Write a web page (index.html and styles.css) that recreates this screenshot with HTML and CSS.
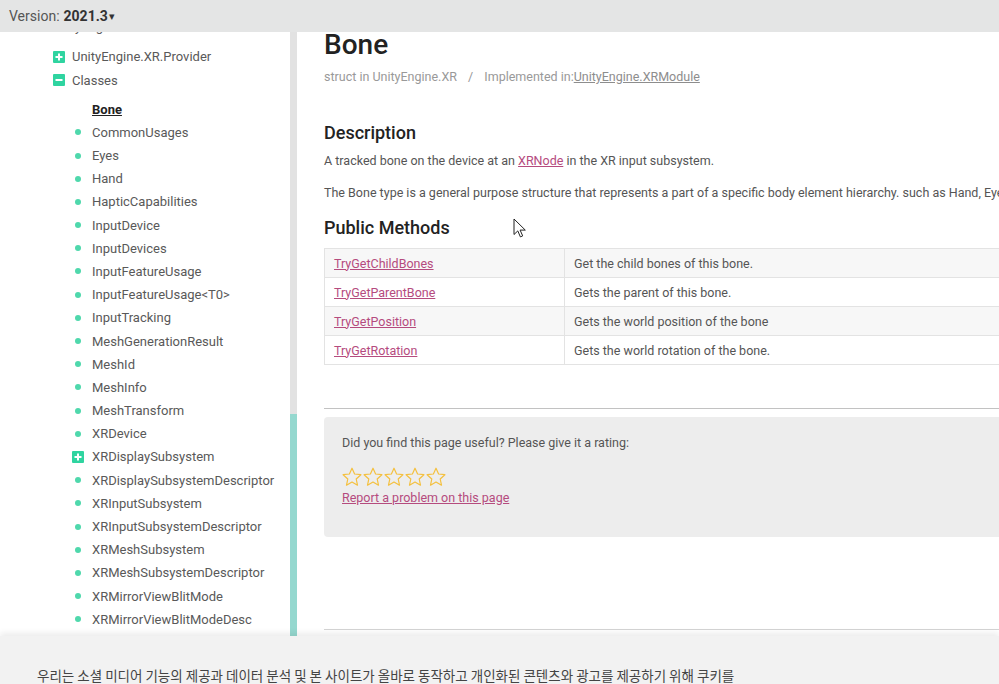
FILE: index.html
```html
<!DOCTYPE html>
<html lang="en">
<head>
<meta charset="utf-8">
<title>Bone - Unity Scripting API</title>
<link rel="stylesheet" href="styles.css">
</head>
<body>
<header class="topbar">
  <span class="version-label">Version:</span>
  <span class="version-num">2021.3</span><span class="caret">&#9662;</span>
</header>

<div class="layout">
  <nav class="sidebar">
    <div class="tree">
      <div class="node lvl1"><svg class="ico" viewBox="0 0 12 12"><rect width="12" height="12" rx="1" class="sq"/><path d="M2.5 6h7" class="mk"/></svg><span>UnityEngine.XR</span></div>
      <div class="node lvl2 first"><svg class="ico" viewBox="0 0 12 12"><rect width="12" height="12" rx="1" class="sq"/><path d="M2.5 6h7M6 2.5v7" class="mk"/></svg><span>UnityEngine.XR.Provider</span></div>
      <div class="node lvl2"><svg class="ico" viewBox="0 0 12 12"><rect width="12" height="12" rx="1" class="sq"/><path d="M2.5 6h7" class="mk"/></svg><span>Classes</span></div>
      <div class="node lvl3 current"><span>Bone</span></div>
      <div class="node lvl3"><i class="dot"></i><span>CommonUsages</span></div>
      <div class="node lvl3"><i class="dot"></i><span>Eyes</span></div>
      <div class="node lvl3"><i class="dot"></i><span>Hand</span></div>
      <div class="node lvl3"><i class="dot"></i><span>HapticCapabilities</span></div>
      <div class="node lvl3"><i class="dot"></i><span>InputDevice</span></div>
      <div class="node lvl3"><i class="dot"></i><span>InputDevices</span></div>
      <div class="node lvl3"><i class="dot"></i><span>InputFeatureUsage</span></div>
      <div class="node lvl3"><i class="dot"></i><span>InputFeatureUsage&lt;T0&gt;</span></div>
      <div class="node lvl3"><i class="dot"></i><span>InputTracking</span></div>
      <div class="node lvl3"><i class="dot"></i><span>MeshGenerationResult</span></div>
      <div class="node lvl3"><i class="dot"></i><span>MeshId</span></div>
      <div class="node lvl3"><i class="dot"></i><span>MeshInfo</span></div>
      <div class="node lvl3"><i class="dot"></i><span>MeshTransform</span></div>
      <div class="node lvl3"><i class="dot"></i><span>XRDevice</span></div>
      <div class="node lvl3"><svg class="ico ico3" viewBox="0 0 12 12"><rect width="12" height="12" rx="1" class="sq"/><path d="M2.5 6h7M6 2.5v7" class="mk"/></svg><span>XRDisplaySubsystem</span></div>
      <div class="node lvl3"><i class="dot"></i><span>XRDisplaySubsystemDescriptor</span></div>
      <div class="node lvl3"><i class="dot"></i><span>XRInputSubsystem</span></div>
      <div class="node lvl3"><i class="dot"></i><span>XRInputSubsystemDescriptor</span></div>
      <div class="node lvl3"><i class="dot"></i><span>XRMeshSubsystem</span></div>
      <div class="node lvl3"><i class="dot"></i><span>XRMeshSubsystemDescriptor</span></div>
      <div class="node lvl3"><i class="dot"></i><span>XRMirrorViewBlitMode</span></div>
      <div class="node lvl3"><i class="dot"></i><span>XRMirrorViewBlitModeDesc</span></div>
      <div class="node lvl3"><i class="dot"></i><span>XRMirrorViewBlitParams</span></div>
    </div>
    <div class="scrollbar"><div class="thumb"></div></div>
  </nav>

  <main class="content">
    <div class="inner">
      <h1 class="title">Bone</h1>
      <p class="signature">struct in UnityEngine.XR <span class="sep">/</span> Implemented in:<a href="#" class="module">UnityEngine.XRModule</a></p>

      <h2 class="section">Description</h2>
      <p class="text first">A tracked bone on the device at an <a href="#" class="link">XRNode</a> in the XR input subsystem.</p>
      <p class="text second">The Bone type is a general purpose structure that represents a part of a specific body element hierarchy. such as Hand, Eyes, or full body skeleton.</p>

      <h2 class="section methods">Public Methods</h2>
      <table class="members">
        <tr><td class="lbl"><a href="#" class="link">TryGetChildBones</a></td><td class="desc">Get the child bones of this bone.</td></tr>
        <tr><td class="lbl"><a href="#" class="link">TryGetParentBone</a></td><td class="desc">Gets the parent of this bone.</td></tr>
        <tr><td class="lbl"><a href="#" class="link">TryGetPosition</a></td><td class="desc">Gets the world position of the bone</td></tr>
        <tr><td class="lbl"><a href="#" class="link">TryGetRotation</a></td><td class="desc">Gets the world rotation of the bone.</td></tr>
      </table>

      <hr class="rule">

      <div class="feedback">
        <p class="fb-q">Did you find this page useful? Please give it a rating:</p>
        <div class="stars">
          <svg class="star" viewBox="0 0 20 20"><path d="M10 1.2l2.6 5.8 6.3.7-4.7 4.3 1.3 6.2L10 15l-5.5 3.2 1.3-6.2L1.1 7.7l6.3-.7z"/></svg>
          <svg class="star" viewBox="0 0 20 20"><path d="M10 1.2l2.6 5.8 6.3.7-4.7 4.3 1.3 6.2L10 15l-5.5 3.2 1.3-6.2L1.1 7.7l6.3-.7z"/></svg>
          <svg class="star" viewBox="0 0 20 20"><path d="M10 1.2l2.6 5.8 6.3.7-4.7 4.3 1.3 6.2L10 15l-5.5 3.2 1.3-6.2L1.1 7.7l6.3-.7z"/></svg>
          <svg class="star" viewBox="0 0 20 20"><path d="M10 1.2l2.6 5.8 6.3.7-4.7 4.3 1.3 6.2L10 15l-5.5 3.2 1.3-6.2L1.1 7.7l6.3-.7z"/></svg>
          <svg class="star" viewBox="0 0 20 20"><path d="M10 1.2l2.6 5.8 6.3.7-4.7 4.3 1.3 6.2L10 15l-5.5 3.2 1.3-6.2L1.1 7.7l6.3-.7z"/></svg>
        </div>
        <a href="#" class="link report">Report a problem on this page</a>
      </div>

      <hr class="rule bottom">
    </div>
    <svg class="cursor" viewBox="0 0 13 20" width="13" height="20"><path d="M1 1v15.5l3.8-3.6 2.6 6 2.3-1-2.6-5.8h5.2z" fill="#fff" stroke="#222" stroke-width="1" stroke-linejoin="round"/></svg>
  </main>
</div>

<footer class="cookie">
  <p>우리는 소셜 미디어 기능의 제공과 데이터 분석 및 본 사이트가 올바로 동작하고 개인화된 콘텐츠와 광고를 제공하기 위해 쿠키를</p>
</footer>
</body>
</html>
```

FILE: styles.css
```css
* { box-sizing: border-box; }

html, body {
  margin: 0;
  padding: 0;
  height: 684px;
  overflow: hidden;
  background: #fff;
  font-family: Roboto, "Liberation Sans", sans-serif;
}

.topbar {
  height: 32px;
  background: #e4e5e5;
  display: flex;
  align-items: center;
  padding-left: 9px;
  font-size: 14px;
  color: #555;
  position: relative;
  z-index: 2;
}
.version-label { margin-right: 4px; }
.version-num { font-weight: 700; color: #333; }
.caret { font-size: 11px; color: #333; margin-left: 1px; }

.layout {
  display: flex;
  height: 604px;
}

/* Sidebar */
.sidebar {
  width: 297px;
  flex: none;
  display: flex;
  overflow: hidden;
  background: #fff;
}
.tree {
  width: 290px;
  margin-top: -17.6px;
  font-size: 13px;
  color: #595959;
}
.node {
  height: 23.2px;
  display: flex;
  align-items: center;
  white-space: nowrap;
}
.lvl1 { padding-left: 33px; }
.lvl2 { padding-left: 53px; }
.lvl2.first { margin-top: 7.8px; }
.lvl3 { padding-left: 72px; }
.current {
  padding-left: 92px;
  margin-top: 5.8px;
  font-weight: 700;
  color: #222;
  text-decoration: underline;
}
.ico { width: 12px; height: 12px; margin-right: 7px; flex: none; }
.ico3 { margin-right: 8px; }
.sq { fill: #2fd4a0; }
.mk { stroke: #fff; stroke-width: 2; fill: none; }
.dot {
  width: 6px;
  height: 6px;
  border-radius: 50%;
  background: #4fd8ac;
  margin-left: 3px;
  margin-right: 11px;
  flex: none;
}
.scrollbar {
  width: 7px;
  background: #e2e2e2;
  display: flex;
  flex-direction: column;
  justify-content: flex-end;
}
.thumb {
  height: 222px;
  background: #95d8cf;
}

/* Main content */
.content {
  flex: 1;
  overflow: hidden;
  position: relative;
  padding-left: 27px;
}
.inner { width: 780px; }

.title {
  margin: 0;
  font-size: 28px;
  line-height: 26px;
  font-weight: 500;
  color: #222;
}
.signature {
  margin: 10px 0 0;
  font-size: 12.5px;
  line-height: 18px;
  color: #999;
}
.sep { margin: 0 8px; }
.module { color: #8d8d8d; }

.section {
  margin: 35px 0 0;
  font-size: 18px;
  line-height: 24px;
  font-weight: 500;
  color: #222;
}
.section.methods { margin-top: 14px; }

.text {
  margin: 0;
  font-size: 12.5px;
  line-height: 18px;
  color: #555;
  white-space: nowrap;
}
.text.first { margin-top: 7px; }
.text.second { margin-top: 14px; }

.link { color: #b54b7e; }

.members {
  margin-top: 8px;
  border-collapse: collapse;
  width: 780px;
  font-size: 12.5px;
}
.members tr { height: 29px; }
.members td {
  height: 29px;
  padding: 0 9px;
  border: 1px solid #e3e3e3;
  color: #555;
}
.members tr:nth-child(odd) td { background: #f7f7f7; }
.members .lbl { width: 240px; }

.rule {
  margin: 43px 0 0;
  border: 0;
  border-top: 1px solid #c2c2c2;
  height: 0;
}
.rule.bottom { margin-top: 92px; border-top-color: #d4d4d4; }

.feedback {
  margin-top: 8px;
  height: 120px;
  background: #ededed;
  border-radius: 4px;
  padding: 17px 18px 0;
}
.fb-q {
  margin: 0;
  font-size: 12.5px;
  line-height: 18px;
  color: #555;
}
.stars {
  display: flex;
  gap: 1px;
  margin-top: 15px;
}
.star {
  width: 20px;
  height: 20px;
}
.star path {
  fill: none;
  stroke: #f4c03f;
  stroke-width: 1.2;
  stroke-linejoin: round;
}
.report {
  display: block;
  font-size: 12.5px;
  line-height: 16px;
  margin-top: 3px;
}

.cursor {
  position: absolute;
  left: 216px;
  top: 186px;
}

/* Cookie banner */
.cookie {
  height: 48px;
  background: #f2f2f2;
  position: relative;
  box-shadow: 0 -3px 6px rgba(0,0,0,0.08);
  padding: 30px 0 0 37px;
}
.cookie p {
  margin: 0;
  font-family: "Noto Sans CJK KR", Roboto, sans-serif;
  font-size: 13.5px;
  line-height: 18px;
  color: #444;
  white-space: nowrap;
}
```
